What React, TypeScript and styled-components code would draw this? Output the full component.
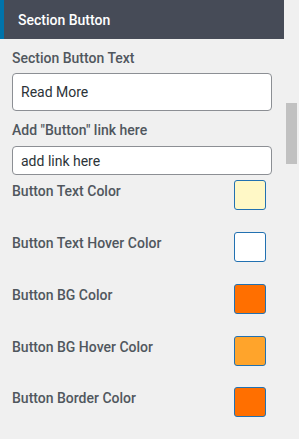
import React from "react";
import styled, { createGlobalStyle } from "styled-components";

// Customizer-style "Section Button" panel with text inputs and colour swatches.

const GlobalStyle = createGlobalStyle`
  html, body {
    margin: 0;
    padding: 0;
    background: #f0f0f0;
    font-family: Roboto, "Liberation Sans", sans-serif;
  }
`;

const Shell = styled.div`
  display: flex;
  width: 299px;
  height: 439px;
  overflow: hidden;
  background: #f0f0f0;
`;

const Panel = styled.div`
  width: 284px;
  flex-shrink: 0;
  display: flex;
  flex-direction: column;
`;

const Header = styled.div`
  height: 40px;
  box-sizing: border-box;
  display: flex;
  align-items: center;
  padding-left: 14px;
  background: #464b57;
  border-left: 4px solid #0073aa;
  color: #fff;
  font-size: 14px;
  font-weight: 500;
`;

const Body = styled.div`
  display: flex;
  flex-direction: column;
  padding: 10px 12px 0 12px;
`;

const Label = styled.div`
  font-size: 14px;
  font-weight: 500;
  color: #50575e;
  line-height: 18px;
`;

const Field = styled.div<{ $labelGap: number; $after: number }>`
  display: flex;
  flex-direction: column;
  gap: ${(p) => p.$labelGap}px;
  margin-bottom: ${(p) => p.$after}px;
`;

const TextInput = styled.input<{ $height: number }>`
  box-sizing: border-box;
  width: 260px;
  height: ${(p) => p.$height}px;
  padding: 0 8px;
  border: 1px solid #8c8f94;
  border-radius: 4px;
  background: #fff;
  font-family: Roboto, "Liberation Sans", sans-serif;
  font-size: 14px;
  color: #2c3338;
  outline: none;
`;

const ColorRow = styled.div`
  display: flex;
  justify-content: space-between;
  align-items: flex-start;
  height: 51.75px;
  padding-right: 6px;
`;

const ColorLabel = styled(Label)`
  padding-top: 2px;
`;

const Swatch = styled.div<{ $color: string }>`
  box-sizing: border-box;
  width: 32px;
  height: 30px;
  border: 1px solid #2271b1;
  border-radius: 3px;
  background: ${(p) => p.$color};
`;

const Track = styled.div`
  flex: 1;
  background: #f0f0f0;
  position: relative;
`;

const Thumb = styled.div`
  position: absolute;
  left: 2px;
  top: 103px;
  width: 11px;
  height: 61px;
  background: #c1c1c1;
`;

const colors = [
  { label: "Button Text Color", color: "#fff8c6" },
  { label: "Button Text Hover Color", color: "#ffffff" },
  { label: "Button BG Color", color: "#ff6f00" },
  { label: "Button BG Hover Color", color: "#ffa42b" },
  { label: "Button Border Color", color: "#ff6f00" },
];

export default function App() {
  return (
    <>
      <GlobalStyle />
      <Shell>
        <Panel>
          <Header>Section Button</Header>
          <Body>
            <Field $labelGap={6} $after={10}>
              <Label>Section Button Text</Label>
              <TextInput $height={38} defaultValue="Read More" />
            </Field>
            <Field $labelGap={7} $after={5}>
              <Label>Add "Button" link here</Label>
              <TextInput $height={29} defaultValue="add link here" />
            </Field>
            {colors.map((c) => (
              <ColorRow key={c.label}>
                <ColorLabel>{c.label}</ColorLabel>
                <Swatch $color={c.color} />
              </ColorRow>
            ))}
          </Body>
        </Panel>
        <Track>
          <Thumb />
        </Track>
      </Shell>
    </>
  );
}
